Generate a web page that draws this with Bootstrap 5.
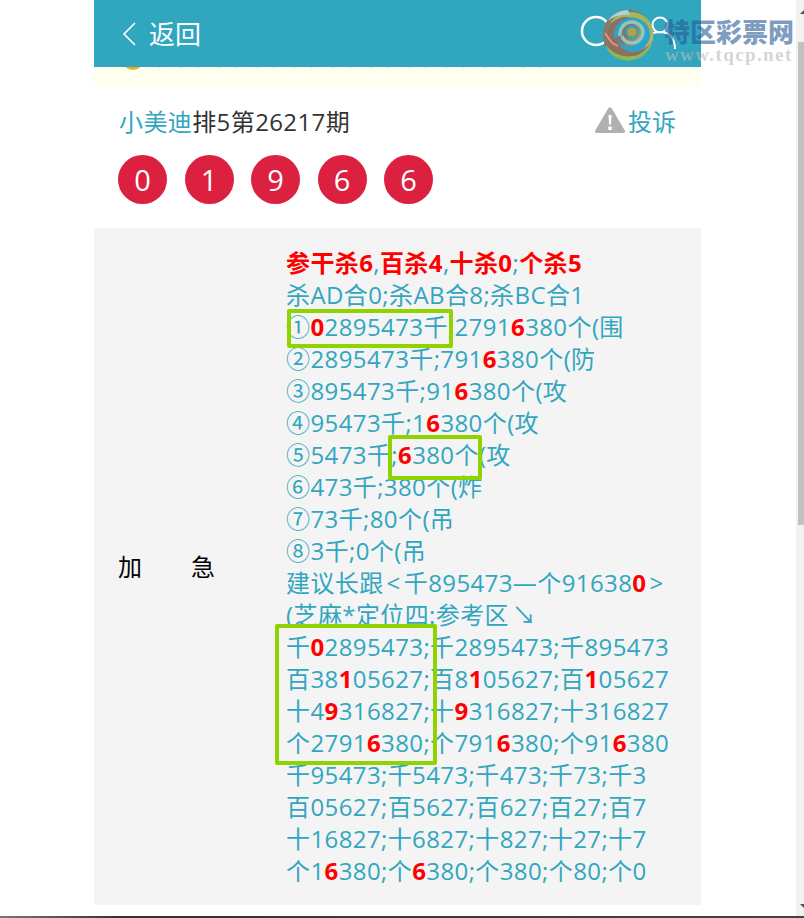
<!DOCTYPE html>
<html lang="zh">
<head>
<meta charset="utf-8">
<title>返回</title>
<link href="https://cdn.jsdelivr.net/npm/bootstrap@5.3.0/dist/css/bootstrap.min.css" rel="stylesheet">
<style>
html,body{height:918px;overflow:hidden;background:#fff;}
body{font-family:"Open Sans","Noto Sans CJK SC",sans-serif;font-size:24px;line-height:32px;color:#333;}
.page-col{width:607px;margin-left:94px;}
.top-bar{height:67px;background:#31a6bf;color:#fff;padding-left:28px;}
.back-word{font-size:26px;margin-left:13px;}
.notice-strip{height:20px;background:#fffff0;overflow:hidden;padding-left:28px;}
.notice-dot{width:22px;height:22px;border:3px solid #f5a623;border-radius:50%;margin-top:-19px;flex:none;}
.notice-ghost{width:400px;height:1px;margin-left:14px;background:repeating-linear-gradient(90deg,#f6e7b8 0 3px,#fffff0 3px 21px,#f6e7b8 21px 25px,#fffff0 25px 38px);}
.title-row{padding:19px 25px 0 26px;height:68px;}
.title-text{letter-spacing:.4px;margin-left:-1px;}
.blue{color:#32a6bf;}
.warn-mark{margin-right:2px;}
.ball-row{gap:17.5px;padding-left:24px;height:73px;}
.ball{width:49px;height:49px;border-radius:50%;background:#dc2040;color:#fff;font-size:29px;}
.detail-panel{background:#f4f4f4;height:677px;padding:19px 0 18px;}
.label-cell{width:97px;margin-left:24px;margin-right:71px;color:#000;flex:none;}
.detail-text{color:#32a6bf;white-space:nowrap;letter-spacing:.4px;}
.detail-text b{color:#f00;font-weight:700;}
.wide-sign{margin:0 3px;}
.green-box{position:absolute;border:4px solid #8fd400;border-radius:2px;}
.box-a{left:287px;top:309px;width:166px;height:39px;}
.box-b{left:388px;top:435px;width:94px;height:45px;}
.box-c{left:275px;top:624px;width:162px;height:141px;}
.head-icons{position:absolute;left:0;top:0;pointer-events:none;}
.mark-name{position:absolute;left:664px;top:18px;font:900 26px/26px "Noto Sans CJK SC",sans-serif;color:rgba(40,90,150,.6);white-space:nowrap;}
.mark-url{position:absolute;left:665px;top:46px;font:700 19px/18px "Liberation Serif",serif;letter-spacing:1.4px;color:rgba(185,185,185,.6);white-space:nowrap;}
.fake-track{position:absolute;left:796px;top:0;width:8px;height:916px;background:#f1f1f1;}
.fake-thumb{position:absolute;left:798px;top:42px;width:6px;height:483px;background:#c1c1c1;}
.track-up,.track-down{position:absolute;left:800px;width:0;height:0;border-left:4px solid transparent;border-right:4px solid transparent;}
.track-up{top:10px;border-bottom:4px solid #505050;}
.track-down{top:904px;border-top:4px solid #505050;}
.screen-edge{position:absolute;left:0;top:916px;width:804px;height:2px;background:linear-gradient(90deg,#777,#333 15%,#444);}
</style>
</head>
<body class="position-relative m-0">
<div class="page-col">
  <div class="top-bar d-flex align-items-center">
    <svg width="14" height="24" viewBox="0 0 14 24" fill="none" stroke="#fff" stroke-width="1.600"><path d="M13 1 2 12l11 11"/></svg>
    <span class="back-word">返回</span>
  </div>
  <div class="notice-strip d-flex align-items-start">
    <span class="notice-dot"></span><span class="notice-ghost"></span>
  </div>
  <div class="title-row d-flex justify-content-between align-items-start">
    <div class="title-text"><span class="blue">小美迪</span>排5第26217期</div>
    <div class="d-flex align-items-center blue">
      <svg width="32" height="28" viewBox="0 0 32 28" class="mb-1 warn-mark"><path d="M16 1.500c-.9 0-1.600.5-2 1.200L1.200 24.400C.4 25.800 1.400 27 3 27h26c1.600 0 2.600-1.200 1.800-2.600L18 2.700c-.4-.7-1.100-1.200-2-1.200Z" fill="#b0b0b0"/><path d="M14.400 9h3.200l-.6 9.500h-2zM14.300 20.500h3.400V24h-3.400z" fill="#fff"/></svg>
      <span>投诉</span>
    </div>
  </div>
  <div class="ball-row d-flex align-items-start">
    <span class="ball d-flex align-items-center justify-content-center">0</span>
    <span class="ball d-flex align-items-center justify-content-center">1</span>
    <span class="ball d-flex align-items-center justify-content-center">9</span>
    <span class="ball d-flex align-items-center justify-content-center">6</span>
    <span class="ball d-flex align-items-center justify-content-center">6</span>
  </div>
  <div class="detail-panel d-flex align-items-center">
    <div class="label-cell d-flex justify-content-between"><span>加</span><span>急</span></div>
    <div class="detail-text">
      <div><b>参干杀6</b>,<b>百杀4</b>,<b>十杀0</b>;<b>个杀5</b></div>
      <div>杀AD合0;杀AB合8;杀BC合1</div>
      <div>①<b>0</b>2895473千;2791<b>6</b>380个(围</div>
      <div>②2895473千;791<b>6</b>380个(防</div>
      <div>③895473千;91<b>6</b>380个(攻</div>
      <div>④95473千;1<b>6</b>380个(攻</div>
      <div>⑤5473千;<b>6</b>380个(攻</div>
      <div>⑥473千;380个(炸</div>
      <div>⑦73千;80个(吊</div>
      <div>⑧3千;0个(吊</div>
      <div>建议长跟<span class="wide-sign">&lt;</span>千895473—个91638<b>0</b><span class="wide-sign">&gt;</span></div>
      <div>(芝麻*定位四:参考区<span class="wide-sign">↘</span></div>
      <div>千<b>0</b>2895473;千2895473;千895473</div>
      <div>百38<b>1</b>05627;百8<b>1</b>05627;百<b>1</b>05627</div>
      <div>十4<b>9</b>316827;十<b>9</b>316827;十316827</div>
      <div>个2791<b>6</b>380;个791<b>6</b>380;个91<b>6</b>380</div>
      <div>千95473;千5473;千473;千73;千3</div>
      <div>百05627;百5627;百627;百27;百7</div>
      <div>十16827;十6827;十827;十27;十7</div>
      <div>个1<b>6</b>380;个<b>6</b>380;个380;个80;个0</div>
    </div>
  </div>
</div>

<span class="green-box box-a"></span>
<span class="green-box box-b"></span>
<span class="green-box box-c"></span>

<svg class="head-icons" width="804" height="70" viewBox="0 0 804 70" fill="none">
  <defs>
    <clipPath id="orbClip"><circle cx="628" cy="35" r="25.500"/></clipPath>
    <linearGradient id="orbBase" x1="0" y1="0" x2="1" y2=".6">
      <stop offset="0" stop-color="#8f7a6c"/><stop offset=".55" stop-color="#7f7570"/><stop offset="1" stop-color="#a9c76a"/>
    </linearGradient>
  </defs>
  <circle cx="596" cy="31" r="14" stroke="#fff" stroke-width="2.500"/>
  <circle cx="660" cy="25" r="7.500" stroke="#fff" stroke-width="2"/>
  <path d="M644 47c0-9 6-15 16-15 9 0 15 6 15 17" stroke="#fff" stroke-width="2"/>
  <g clip-path="url(#orbClip)">
    <circle cx="628" cy="35" r="25.500" fill="url(#orbBase)"/>
    <path d="M610 24c5-10 18-15 30-10 9 4 15 13 14 22-3-9-9-16-19-18-9-2-18 0-25 6Z" fill="#9dba5e"/>
    <path d="M608 31c2-9 11-15 20-14 -7 3-12 9-12 16 0 10 8 18 18 18 8 0 15-4 18-11-1 10-10 18-22 19-13 0-24-10-22-28Z" fill="#8c6f5d"/>
    <path d="M614 38c-2-12 8-21 18-20 10 0 18 8 18 17 0 10-8 17-17 17-8 0-14-5-15-11 3 4 8 6 13 5 7-1 12-6 12-12 0-8-6-12-13-12-7 0-13 5-12 14 0 1-2 3-4 2Z" fill="#2fa2c9"/>
    <path d="M620 36c-1-8 5-14 12-14 6 0 11 5 11 10 0 6-5 11-11 11-5 0-9-3-10-7" stroke="#8ec7c0" stroke-width="3.500"/>
    <circle cx="632" cy="32" r="6.500" fill="#2ba5bd"/>
    <circle cx="632" cy="32" r="4.500" fill="#b5a043"/>
    <path d="M606 45c6 8 16 13 27 11 8-1 14-7 18-14 1 10-10 20-24 20-10 0-19-6-21-17Z" fill="#8cb957"/>
    <path d="M628 10c-8 0-16 4-20 11 6-5 14-7 22-6-1-2-1-3-2-5Z" fill="#a9d3db"/>
  </g>
  <path d="M605 33l7 10 6 3M646 46l5-5" stroke="#f0988a" stroke-width="1.500"/>
</svg>
<span class="mark-name">特区彩票网</span>
<span class="mark-url">www.tqcp.net</span>

<span class="fake-track"></span>
<span class="fake-thumb"></span>
<span class="track-up"></span>
<span class="track-down"></span>
<span class="screen-edge"></span>
</body>
</html>
